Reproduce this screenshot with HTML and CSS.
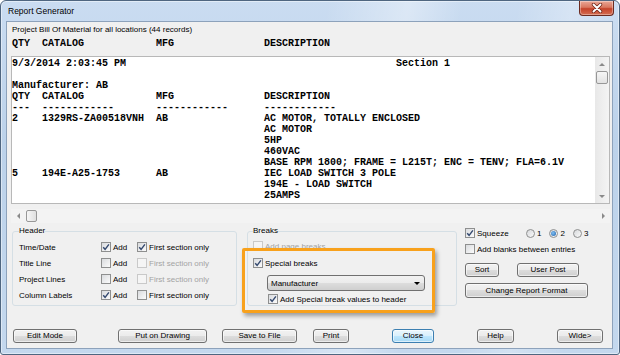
FILE: index.html
```html
<!DOCTYPE html>
<html lang="en">
<head>
    <meta charset="UTF-8">
    <title>Report Generator</title>
    <link rel="stylesheet" href="styles.css">
</head>
<body>
    <div class="window">
        <div class="titlebar">
            <span class="title">Report Generator</span>
            <span class="close-btn">
                <svg width="12" height="10" viewBox="0 0 12 10">
                    <path d="M2.5 1.5 L9.5 8.5 M9.5 1.5 L2.5 8.5" stroke="#6e2417" stroke-width="3.4" stroke-linecap="round"/>
                    <path d="M2.5 1.5 L9.5 8.5 M9.5 1.5 L2.5 8.5" stroke="#ffffff" stroke-width="1.9" stroke-linecap="round"/>
                </svg>
            </span>
        </div>

        <div class="client">
            <div class="caption">Project Bill Of Material for all locations (44 records)</div>
            <pre class="colhead">QTY  CATALOG            MFG               DESCRIPTION</pre>

            <div class="report">
                <div class="report-body">
<pre class="report-text">9/3/2014 2:03:45 PM                                             Section 1

Manufacturer: AB
QTY  CATALOG            MFG               DESCRIPTION
---  ------------       ------------      ------------
2    1329RS-ZA00518VNH  AB                AC MOTOR, TOTALLY ENCLOSED
                                          AC MOTOR
                                          5HP
                                          460VAC
                                          BASE RPM 1800; FRAME = L215T; ENC = TENV; FLA=6.1V
5    194E-A25-1753      AB                IEC LOAD SWITCH 3 POLE
                                          194E - LOAD SWITCH
                                          25AMPS</pre>
                    <div class="vscroll">
                        <span class="arrow-cell"><span class="arrow up"></span></span>
                        <span class="thumb vthumb"></span>
                        <span class="spacer"></span>
                        <span class="arrow-cell"><span class="arrow down"></span></span>
                    </div>
                </div>
                <div class="hscroll">
                    <span class="arrow-cell"><span class="arrow left"></span></span>
                    <span class="thumb hthumb"></span>
                    <span class="spacer"></span>
                    <span class="arrow-cell"><span class="arrow right"></span></span>
                </div>
            </div>

            <div class="options">
                <fieldset class="group group-header">
                    <legend>Header</legend>
                    <div class="header-grid">
                        <span>Time/Date</span>
                        <span class="check"><span class="box"><svg width="8" height="8" viewBox="0 0 8 8"><path d="M1.2 4.2 L3.1 6.3 L6.9 1.3" stroke="#34496f" stroke-width="1.4" fill="none"/></svg></span>Add</span>
                        <span class="check"><span class="box"><svg width="8" height="8" viewBox="0 0 8 8"><path d="M1.2 4.2 L3.1 6.3 L6.9 1.3" stroke="#34496f" stroke-width="1.4" fill="none"/></svg></span>First section only</span>

                        <span>Title Line</span>
                        <span class="check"><span class="box"></span>Add</span>
                        <span class="check disabled"><span class="box"></span>First section only</span>

                        <span>Project Lines</span>
                        <span class="check"><span class="box"></span>Add</span>
                        <span class="check disabled"><span class="box"></span>First section only</span>

                        <span>Column Labels</span>
                        <span class="check"><span class="box"><svg width="8" height="8" viewBox="0 0 8 8"><path d="M1.2 4.2 L3.1 6.3 L6.9 1.3" stroke="#34496f" stroke-width="1.4" fill="none"/></svg></span>Add</span>
                        <span class="check"><span class="box"></span>First section only</span>
                    </div>
                </fieldset>

                <fieldset class="group group-breaks">
                    <legend>Breaks</legend>
                    <span class="check disabled page-breaks"><span class="box"></span>Add page breaks</span>
                    <span class="check special-breaks"><span class="box"><svg width="8" height="8" viewBox="0 0 8 8"><path d="M1.2 4.2 L3.1 6.3 L6.9 1.3" stroke="#34496f" stroke-width="1.4" fill="none"/></svg></span>Special breaks</span>
                    <div class="select">
                        <span>Manufacturer</span>
                        <span class="caret"></span>
                    </div>
                    <span class="check break-values"><span class="box"><svg width="8" height="8" viewBox="0 0 8 8"><path d="M1.2 4.2 L3.1 6.3 L6.9 1.3" stroke="#34496f" stroke-width="1.4" fill="none"/></svg></span>Add Special break values to header</span>
                </fieldset>

                <div class="side">
                    <div class="side-row">
                        <span class="check squeeze"><span class="box"><svg width="8" height="8" viewBox="0 0 8 8"><path d="M1.2 4.2 L3.1 6.3 L6.9 1.3" stroke="#34496f" stroke-width="1.4" fill="none"/></svg></span>Squeeze</span>
                        <div class="radios">
                            <span class="radio"><span class="dot"></span>1</span>
                            <span class="radio"><span class="dot on"><span class="pip"></span></span>2</span>
                            <span class="radio"><span class="dot"></span>3</span>
                        </div>
                    </div>
                    <span class="check blanks"><span class="box"></span>Add blanks between entries</span>
                    <div class="side-buttons">
                        <span class="btn btn-sort">Sort</span>
                        <span class="btn btn-userpost">User Post</span>
                    </div>
                    <span class="btn btn-format">Change Report Format</span>
                </div>

                <div class="highlight"></div>
            </div>

            <div class="actions">
                <span class="btn btn-edit">Edit Mode</span>
                <span class="btn btn-put">Put on Drawing</span>
                <span class="btn btn-save">Save to File</span>
                <span class="btn btn-print">Print</span>
                <span class="btn btn-close">Close</span>
                <span class="btn btn-help">Help</span>
                <span class="btn btn-wide">Wide&gt;</span>
            </div>
        </div>
    </div>
</body>
</html>
```

FILE: styles.css
```css
body {
    margin: 0;
    background: #ffffff;
    font-family: "Liberation Sans", Arial, sans-serif;
    font-size: 8px;
    color: #000;
}

/* Fenster im Win7-Stil */
.window {
    width: 620px;
    height: 355px;
    box-sizing: border-box;
    border: 1px solid #4f6680;
    border-radius: 6px 6px 3px 3px;
    padding: 0 6px 5px 5px;
    display: flex;
    flex-direction: column;
    background:
        linear-gradient(100deg, transparent 48%, rgba(255, 255, 255, 0.35) 60%, transparent 68%, transparent 76%, rgba(255, 255, 255, 0.25) 84%, transparent 92%),
        linear-gradient(#cadcf1, #bcd2ea 40%, #c4d8ee);
    box-shadow: inset 0 0 0 1px rgba(255, 255, 255, 0.45);
}

.titlebar {
    height: 20px;
    display: flex;
    justify-content: space-between;
    align-items: flex-start;
}

.title {
    padding-left: 2px;
    line-height: 20px;
    font-size: 8.5px;
}

.close-btn {
    width: 35px;
    height: 15px;
    margin-right: -1px;
    box-sizing: border-box;
    border: 1px solid #6b2b20;
    border-top: none;
    border-radius: 0 0 4px 4px;
    background: linear-gradient(#eaa897, #d9775f 45%, #c5432a 55%, #d46e52);
    box-shadow: inset 0 0 0 1px rgba(255, 255, 255, 0.35);
    display: flex;
    align-items: center;
    justify-content: center;
}

.client {
    flex: 1;
    display: flex;
    flex-direction: column;
    background: #f0f0f0;
    border: 1px solid #8da2bb;
}

.caption {
    padding: 2px 0 0 5px;
    line-height: 12px;
}

.colhead,
.report-text {
    font-family: "Liberation Mono", "Courier New", monospace;
    font-weight: bold;
    font-size: 10px;
    line-height: 11px;
}

.colhead {
    margin: 2px 0 0 5px;
}

/* Berichtsfenster mit Scrollbalken */
.report {
    margin: 7px 2px 0 4px;
}

.report-body {
    height: 148px;
    box-sizing: border-box;
    border: 1px solid #b8b8b8;
    background: #ffffff;
    display: flex;
}

.report-text {
    flex: 1;
    margin: 0;
    padding-top: 1px;
    overflow: hidden;
}

.vscroll {
    width: 14px;
    background: linear-gradient(90deg, #e8e8e8, #f4f4f4);
    display: flex;
    flex-direction: column;
    align-items: center;
}

.hscroll {
    height: 14px;
    margin-top: 5px;
    background: #f3f3f3;
    display: flex;
    align-items: center;
}

.arrow-cell {
    width: 14px;
    height: 14px;
    display: flex;
    align-items: center;
    justify-content: center;
    flex: none;
}

.spacer {
    flex: 1;
}

.arrow {
    width: 0;
    height: 0;
    border: 3px solid transparent;
}

.arrow.up { border-bottom-color: #8a8a8a; border-top-width: 0; }
.arrow.down { border-top-color: #8a8a8a; border-bottom-width: 0; }
.arrow.left { border-right-color: #8a8a8a; border-left-width: 0; }
.arrow.right { border-left-color: #8a8a8a; border-right-width: 0; }

.thumb {
    box-sizing: border-box;
    border: 1px solid #979797;
    border-radius: 2px;
    background: linear-gradient(#f6f6f6, #e2e2e2);
}

.vthumb {
    width: 12px;
    height: 13px;
}

.hthumb {
    width: 11px;
    height: 12px;
    margin-left: 1px;
    background: linear-gradient(90deg, #f6f6f6, #e0e0e0);
}

/* Optionen unten */
.options {
    position: relative;
    margin-top: 3px;
    padding-left: 5px;
    display: flex;
}

.group {
    margin: 0;
    box-sizing: border-box;
    border: 1px solid #d5dfe5;
    border-radius: 3px;
    min-width: 0;
}

.group legend {
    padding: 0;
    line-height: 10px;
}

.group-header {
    width: 225px;
    padding: 0 5px 0 6px;
}

.group-breaks {
    width: 210px;
    margin-left: 10px;
    padding: 0 5px 0 5px;
    display: flex;
    flex-direction: column;
    align-items: flex-start;
}

.header-grid {
    display: grid;
    grid-template-columns: 82px 36px auto;
    grid-auto-rows: 16px;
    align-items: center;
    padding-top: 3px;
}

.check {
    display: flex;
    align-items: center;
    gap: 2px;
    height: 12px;
    white-space: nowrap;
}

.box {
    width: 10px;
    height: 10px;
    box-sizing: border-box;
    border: 1px solid #8e8f8f;
    background: linear-gradient(135deg, #d9dbde, #fbfbfb);
    display: flex;
    align-items: center;
    justify-content: center;
    flex: none;
}

.check.disabled {
    color: #a3a3a3;
}

.check.disabled .box {
    border-color: #c9c9c9;
    background: #f5f5f5;
}

.page-breaks { margin-top: 4px; }
.special-breaks { margin-top: 5px; }
.break-values { margin: 2px 0 0 15px; }

.select {
    margin: 6px 0 0 14px;
    width: 158px;
    height: 16px;
    box-sizing: border-box;
    border: 1px solid #707070;
    border-radius: 3px;
    padding: 0 4px 0 3px;
    background: linear-gradient(#f2f2f2 0, #ebebeb 50%, #dddddd 50%, #cfcfcf 100%);
    display: flex;
    align-items: center;
    justify-content: space-between;
}

.caret {
    width: 0;
    height: 0;
    border-left: 3px solid transparent;
    border-right: 3px solid transparent;
    border-top: 3px solid #000;
}

.side {
    margin-left: 8px;
    display: flex;
    flex-direction: column;
    align-items: flex-start;
}

.side-row {
    display: flex;
    align-items: center;
    margin-top: 1px;
}

.squeeze {
    width: 61px;
}

.radios {
    display: flex;
    gap: 8px;
}

.radio {
    display: flex;
    align-items: center;
    gap: 2px;
    height: 12px;
}

.dot {
    width: 9px;
    height: 9px;
    box-sizing: border-box;
    border: 1px solid #8e8f8f;
    border-radius: 50%;
    background: linear-gradient(135deg, #d6d8db, #fafafa);
    display: flex;
    align-items: center;
    justify-content: center;
}

.pip {
    width: 5px;
    height: 5px;
    border-radius: 50%;
    background: radial-gradient(circle at 40% 40%, #7fc0f4, #1f5fa8);
}

.blanks {
    margin-top: 4px;
}

.side-buttons {
    display: flex;
    gap: 18px;
    margin-top: 8px;
}

/* Buttons */
.btn {
    height: 14px;
    box-sizing: border-box;
    border: 1px solid #707070;
    border-radius: 3px;
    background: linear-gradient(#f2f2f2 0, #ebebeb 50%, #dddddd 50%, #cfcfcf 100%);
    box-shadow: inset 0 0 0 1px rgba(255, 255, 255, 0.6);
    display: flex;
    align-items: center;
    justify-content: center;
    line-height: 12px;
    white-space: nowrap;
}

.btn-sort { width: 34px; }
.btn-userpost { width: 62px; }
.btn-format { width: 123px; height: 15px; margin-top: 6px; }

.highlight {
    position: absolute;
    left: 235px;
    top: 22px;
    width: 193px;
    height: 65px;
    box-sizing: border-box;
    border: 3px solid #f8a11c;
    border-radius: 2px;
    box-shadow: 2px 3px 4px rgba(0, 0, 0, 0.35);
    pointer-events: none;
}

.actions {
    margin-top: auto;
    padding: 0 0 5px 6px;
    display: flex;
}

.btn-edit { width: 64px; }
.btn-put { width: 89px; margin-left: 41px; }
.btn-save { width: 75px; margin-left: 15px; }
.btn-print { width: 36px; margin-left: 16px; }
.btn-close {
    width: 42px;
    margin-left: 43px;
    border-color: #3c7fb1;
    background: linear-gradient(#eaf6fd 0, #d9f0fc 50%, #bee6fd 50%, #a7d9f5 100%);
}
.btn-help { width: 37px; margin-left: 43px; }
.btn-wide { width: 46px; margin-left: 43px; }
```
